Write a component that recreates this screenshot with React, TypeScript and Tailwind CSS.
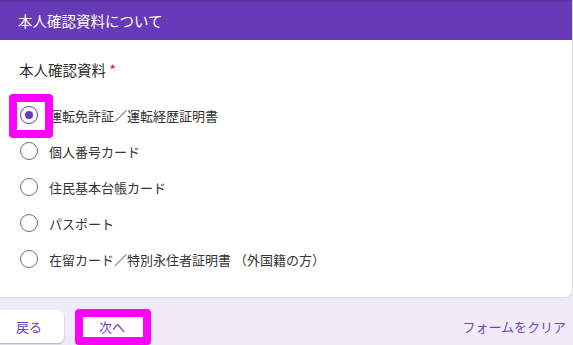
import React from 'react'

const options = [
    '運転免許証／運転経歴証明書',
    '個人番号カード',
    '住民基本台帳カード',
    'パスポート',
    '在留カード／特別永住者証明書 （外国籍の方）',
]

function Radio({ checked }: { checked: boolean }) {
    return (
        <div
            className={`w-[18px] h-[18px] rounded-full border-[1.5px] flex items-center justify-center shrink-0 ${checked ? 'border-[#673ab7]' : 'border-[#6e6e6e]'}`}
        >
            {checked && <div className="w-[8px] h-[8px] rounded-full bg-[#673ab7]"></div>}
        </div>
    )
}

export default function App() {
    return (
        <div
            className="relative w-[573px] h-[345px] overflow-hidden bg-[#f0ebf8] text-[#202124]"
            style={{ fontFamily: '"Noto Sans CJK JP", "Noto Sans", sans-serif' }}
        >
            {/* Card */}
            <div className="h-[298px] bg-white border-r border-b border-[#dadce0] rounded-br-lg overflow-hidden">
                <div className="h-10 bg-[#673ab7] border-t-2 border-[#5a32a3] flex items-center pl-[18px]">
                    <span className="text-white text-[14.5px] leading-none">本人確認資料について</span>
                </div>

                <div className="pt-5 pl-[19px] text-[14.5px] leading-5 text-[#2a2a2a]">
                    本人確認資料 <span className="text-[#d93025]">*</span>
                </div>

                <div className="mt-[17px] flex flex-col">
                    {options.map((opt, i) => (
                        <div key={opt} className="h-9 flex items-center pl-5 gap-[11px]">
                            <Radio checked={i === 0} />
                            <span className="text-[13px] leading-none text-[#333333]">{opt}</span>
                        </div>
                    ))}
                </div>
            </div>

            {/* Footer */}
            <div className="mt-3 flex items-center">
                <button className="-ml-1.5 w-[70px] h-[33px] bg-white rounded-md shadow-[0_1px_2px_rgba(0,0,0,0.25)] text-[#673ab7] text-[13px]">
                    戻る
                </button>
                <button className="ml-[13px] w-[70px] h-[33px] bg-white rounded-md shadow-[0_1px_2px_rgba(0,0,0,0.25)] text-[#673ab7] text-[13px]">
                    次へ
                </button>
                <span className="ml-auto mr-[7px] text-[13px] text-[#7248b9]">フォームをクリア</span>
            </div>

            {/* Highlight boxes */}
            <div className="absolute left-[9px] top-[94px] w-[44px] h-[44px] border-8 border-[#ff00ff] rounded-[4px]"></div>
            <div className="absolute left-[75px] top-[309px] w-[76px] h-[36px] border-8 border-[#ff00ff] rounded-[4px]"></div>
        </div>
    )
}
